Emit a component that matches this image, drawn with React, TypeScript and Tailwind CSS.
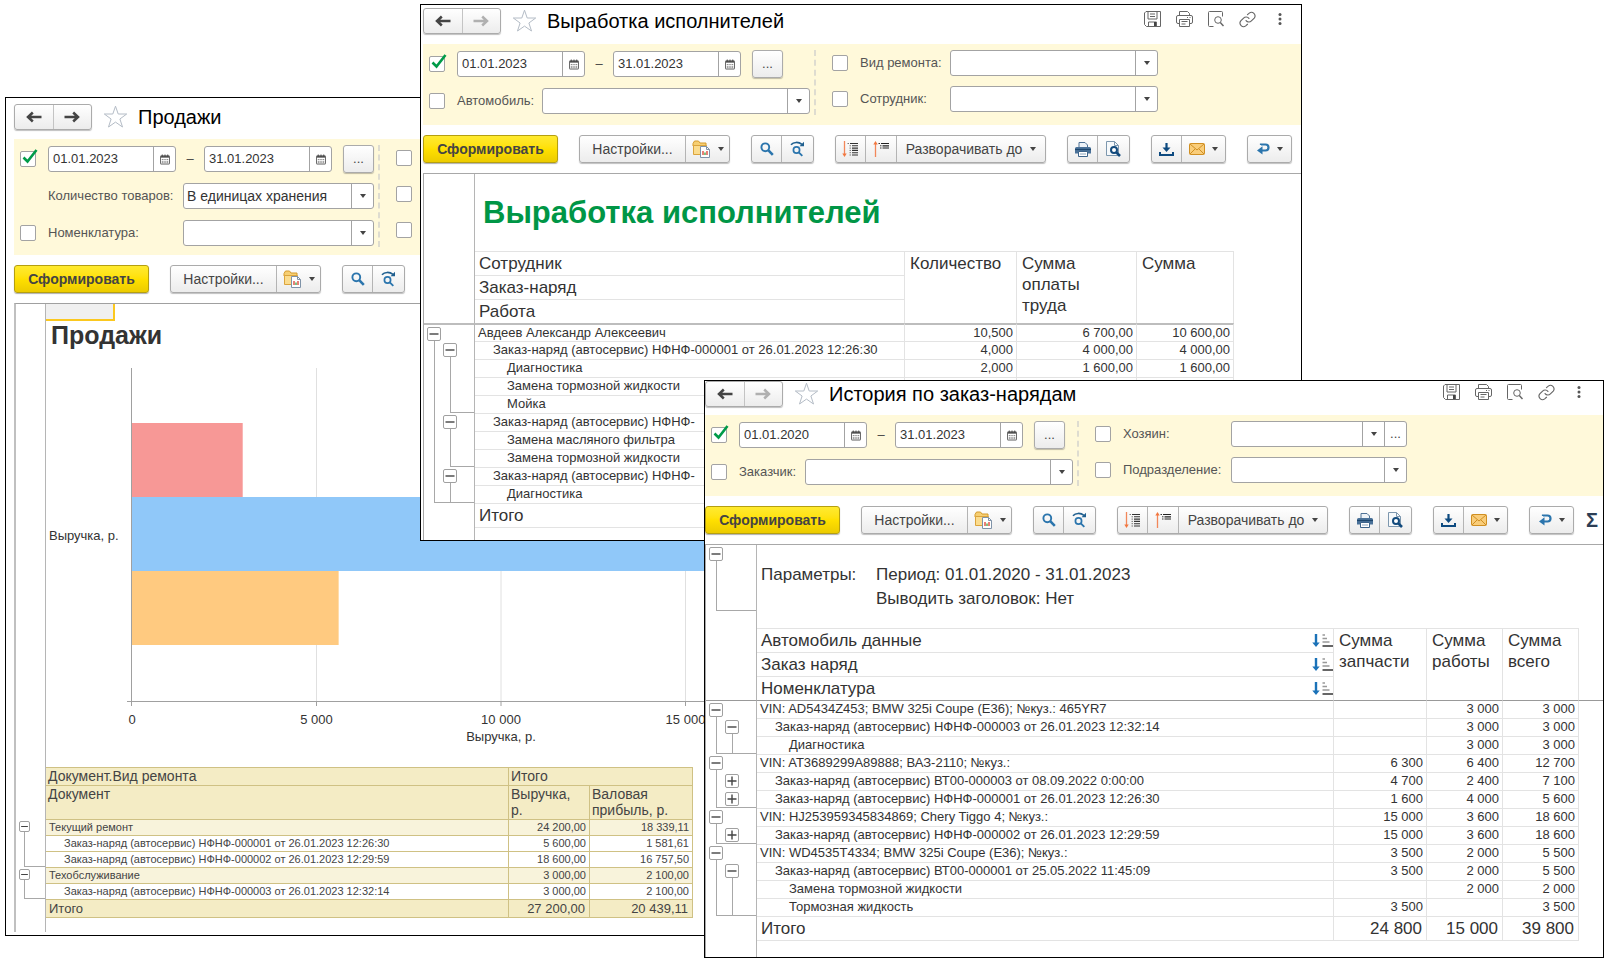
import React, { useId } from "react";
import clsx from "clsx";

/* ---------- icons ---------- */

const Caret = () => (
  <svg width="6" height="4" viewBox="0 0 6 4" className="shrink-0">
    <path d="M0 0h6L3 4z" fill="#444" />
  </svg>
);

const ArrowIcon = ({ right, muted }: { right?: boolean; muted?: boolean }) => (
  <svg width="16" height="12" viewBox="0 0 16 12" fill="none" className={right ? "rotate-180" : ""}>
    <path
      d="M2 6h13.5M6.8 1.5 2 6l4.8 4.5"
      stroke={muted ? "#b0b0b0" : "#444"}
      strokeWidth="2.5"
    />
  </svg>
);

const StarIcon = () => (
  <svg width="25" height="24" viewBox="0 0 24 24" fill="none">
    <path
      d="M12 1.2 14.7 9h8.5l-6.8 5 2.6 8-7-4.9L5 22l2.6-8L.8 9h8.5z"
      stroke="#b4bcc6"
      strokeWidth="1"
    />
  </svg>
);

const CalendarIcon = () => (
  <svg width="10" height="11" viewBox="0 0 11 11">
    <rect x="0.5" y="1.5" width="10" height="9" rx="0.5" fill="#fff" stroke="#555" />
    <path d="M1 2.5h9" stroke="#555" strokeWidth="2" />
    <path d="M2.5 0v2.5M5.5 0v2.5M8.5 0v2.5" stroke="#444" />
    <path d="M2 5.5h7M2 7.5h7M2 9h7" stroke="#555" strokeDasharray="1 1" />
  </svg>
);

const CheckIcon = () => (
  <svg
    width="18"
    height="18"
    viewBox="0 0 18 18"
    fill="none"
    className="pointer-events-none absolute -top-1 left-0 hidden peer-checked:block"
  >
    <path d="M3.5 10.5 7.5 14.5 16.5 3" stroke="#009b48" strokeWidth="2.6" />
  </svg>
);

const FolderReportIcon = () => (
  <svg width="19" height="18" viewBox="0 0 19 18">
    <path d="M1 3.5 2.5 1h4L8 3h6v3H1z" fill="#f6cf73" stroke="#d59a2b" />
    <path d="M1.5 5.5h13v9h-13z" fill="#fbdc8e" stroke="#dba43c" />
    <path d="M8.5 6.5h6l3 3v8h-9z" fill="#fff" stroke="#7f93a8" />
    <path d="M14.5 6.5v3h3" fill="none" stroke="#7f93a8" />
    <path d="M11 15v-4" stroke="#e04b3c" strokeWidth="1.4" />
    <path d="M13 15v-2.5" stroke="#49a84c" strokeWidth="1.4" />
    <path d="M15 15v-4" stroke="#e04b3c" strokeWidth="1.4" />
  </svg>
);

const LensIcon = () => (
  <svg width="14" height="14" viewBox="0 0 14 14" fill="none">
    <circle cx="5.3" cy="5.3" r="3.9" stroke="#2b75ad" strokeWidth="1.9" />
    <path d="m8.2 8.2 4.6 4.6" stroke="#2b75ad" strokeWidth="2.6" />
  </svg>
);

const LensNextIcon = () => (
  <svg width="15" height="16" viewBox="0 0 15 16" fill="none">
    <path d="M1 3.8C3.5.8 8.500.6 12 3.400" stroke="#1f5f8f" strokeWidth="1.600" />
    <path d="M14 .8v4.500H9.500z" fill="#1f5f8f" />
    <circle cx="6.500" cy="9" r="3.100" stroke="#2b75ad" strokeWidth="1.700" />
    <path d="m8.800 11.300 3.500 3.500" stroke="#2b75ad" strokeWidth="1.900" />
  </svg>
);

const ExpandIcon = () => (
  <svg width="17" height="17" viewBox="0 0 17 17" fill="none">
    <path d="M2.500 0v14" stroke="#f2875a" strokeWidth="1.300" />
    <path d="M.3 12.500h4.400L2.500 16z" fill="#f2773f" />
    <path d="M5.500 2.500h1.500M7.500 4.800H9M7.500 7.100H9M7.500 9.400H9M7.500 11.700H9M7.500 14H9" stroke="#777" />
    <path d="M8 2.500h8M10 4.800h6M10 7.100h6M10 9.400h6M10 11.700h6M10 14h6" stroke="#333" strokeWidth="1.100" />
  </svg>
);

const CollapseIcon = () => (
  <svg width="17" height="17" viewBox="0 0 17 17" fill="none">
    <path d="M2.500 16V2" stroke="#f2875a" strokeWidth="1.300" />
    <path d="M.3 3.500h4.400L2.500 0z" fill="#f2773f" />
    <path d="M5.500 2.500H7M7 4.800h1.500M7 7h1.500" stroke="#333" />
    <path d="M8 2.500h8M9.500 4.800H16M9.500 7H16" stroke="#222" strokeWidth="1.200" />
  </svg>
);

const PrinterIcon = () => (
  <svg width="16" height="15" viewBox="0 0 16 15">
    <path d="M4 .5h6l2.500 2.500V7H4z" fill="#eef3f8" stroke="#4f7296" />
    <path d="M1.500 5h13A1.500 1.500 0 0 1 16 6.500V11.500H0V6.500A1.500 1.500 0 0 1 1.500 5z" fill="#4b7299" />
    <path d="M0 7.500h16" stroke="#1d466d" strokeWidth="1.200" />
    <path d="M3.500 9.500h9v5h-9z" fill="#fff" stroke="#3d648b" />
    <path d="M5 12h6" stroke="#8aa4bd" />
  </svg>
);

const DocLensIcon = () => (
  <svg width="15" height="16" viewBox="0 0 15 16" fill="none">
    <path d="M.5.5h8l4 4v10H.5z" fill="#f6f9fb" stroke="#7d97ae" />
    <path d="M8.500.5v4h4" stroke="#7d97ae" />
    <circle cx="8" cy="9" r="3" fill="#fff" stroke="#124a7d" strokeWidth="2" />
    <path d="m10.300 11.300 3.700 3.700" stroke="#124a7d" strokeWidth="2.600" />
  </svg>
);

const DownloadIcon = () => (
  <svg width="15" height="13" viewBox="0 0 15 13" fill="none">
    <path d="M7.500 0v6" stroke="#0d4a80" strokeWidth="2.200" />
    <path d="M3.500 4.500h8L7.500 9z" fill="#0d4a80" />
    <path d="M1 9v3h13V9" stroke="#0d4a80" strokeWidth="2" />
  </svg>
);

const MailIcon = () => (
  <svg width="16" height="12" viewBox="0 0 16 12" fill="none">
    <rect x="0.5" y="0.5" width="15" height="11" rx="1" fill="#f9cd7a" stroke="#d08f22" />
    <path d="m1 1 7 6 7-6M1 11l5-5M15 11l-5-5" stroke="#d08f22" />
  </svg>
);

const ReturnIcon = () => (
  <svg width="13" height="12" viewBox="0 0 13 12" fill="none">
    <path d="M4 2V1.500h4.500a3 3 0 0 1 0 6H5" stroke="#2b75ad" strokeWidth="2.200" />
    <path d="M5.500 3.200v8.300L0 7.400z" fill="#2b75ad" />
  </svg>
);

const SaveIcon = () => (
  <svg width="17" height="16" viewBox="0 0 17 16" fill="none" stroke="#666">
    <path d="M2 .5h14.500v15H2.500L.5 13.500V2z" />
    <path d="M4 .5v7.500h9V.5M6 3h5M6 5.500h5" />
    <path d="M4.500 15.500v-4.500h8v4.500" />
    <path d="M10 11h2v4h-2z" fill="#444" stroke="none" />
  </svg>
);

const PrintOutlineIcon = () => (
  <svg width="17" height="16" viewBox="0 0 17 16" fill="none" stroke="#666">
    <path d="M3.500 4.500v-4h8l2 2v2" />
    <path d="M3.500 12.500H2A1.500 1.500 0 0 1 .5 11V6A1.500 1.500 0 0 1 2 4.500h13A1.500 1.500 0 0 1 16.500 6v5a1.500 1.500 0 0 1-1.500 1.500h-1.500" />
    <path d="M3.500 8.500h10v7h-10zM5.500 10.500h6M5.500 13h4M11 6.500h1M13.500 6.500h1" />
  </svg>
);

const PreviewOutlineIcon = () => (
  <svg width="16" height="16" viewBox="0 0 16 16" fill="none" stroke="#666">
    <path d="M5.500 15.500H1.500a1 1 0 0 1-1-1v-13a1 1 0 0 1 1-1h12a1 1 0 0 1 1 1v4" />
    <circle cx="10" cy="9" r="3.300" />
    <path d="m12.300 11.500 3.200 3.500" strokeWidth="1.500" />
  </svg>
);

const LinkIcon = () => (
  <svg width="17" height="17" viewBox="0 0 24 24" fill="none" stroke="#666" strokeWidth="1.600" strokeLinecap="round">
    <path d="M10 13.500a5 5 0 0 0 7.500.5l4-4a5 5 0 0 0-7-7L12 5.200" />
    <path d="M14 10.500a5 5 0 0 0-7.500-.5l-4 4a5 5 0 0 0 7 7l2.500-2.300" />
  </svg>
);

const DotsIcon = () => (
  <svg width="4" height="12" viewBox="0 0 4 12" fill="#555">
    <circle cx="2" cy="1.500" r="1.500" />
    <circle cx="2" cy="6" r="1.500" />
    <circle cx="2" cy="10.500" r="1.500" />
  </svg>
);

const SortIcon = () => (
  <svg width="21" height="14" viewBox="0 0 21 14" fill="none">
    <path d="M4 0v10" stroke="#1b72b8" strokeWidth="2.400" />
    <path d="M.3 8.500h7.400L4 13z" fill="#1b72b8" />
    <path d="M10.500 1h2.500M10.500 4.500h4.500M10.500 8h7" stroke="#999" strokeWidth="1.300" />
    <path d="M10.500 12h10.500" stroke="#666" strokeWidth="2" />
  </svg>
);

/* ---------- form controls ---------- */

const fieldBox = "h-[26px] rounded-[3px] border border-[#a3a3a3] bg-white";
const raised = "rounded-[3px] border border-[#ababab] bg-linear-to-b from-white to-[#ececec] shadow-[0_1px_1px_#00000040]";

const Check = ({ id, label, checked }: { id?: string; label: string; checked?: boolean }) => (
  <span className="relative block h-4 w-4 shrink-0">
    <input
      id={id}
      type="checkbox"
      aria-label={label}
      defaultChecked={checked}
      className="peer block h-4 w-4 appearance-none rounded-[2px] border border-[#a3a3a3] bg-white"
    />
    <CheckIcon />
  </span>
);

const DateField = ({ value, label }: { value: string; label: string }) => (
  <div className={clsx(fieldBox, "flex w-32 shrink-0")}>
    <input
      aria-label={label}
      defaultValue={value}
      className="w-0 flex-1 pl-1 text-[13px] text-[#333] outline-none"
    />
    <button aria-label="Календарь" className="flex w-[22px] items-center justify-center border-l border-[#a3a3a3]">
      <CalendarIcon />
    </button>
  </div>
);

const Select = ({ id, value = "", more, className }: { id: string; value?: string; more?: boolean; className: string }) => (
  <div className={clsx(fieldBox, "flex", className)}>
    <div className="relative flex-1">
      <select id={id} className="block h-6 w-full appearance-none pr-6 pl-[3px] text-[14px] text-[#333] outline-none">
        <option>{value}</option>
      </select>
      <span className="pointer-events-none absolute inset-y-0 right-0 flex w-[22px] items-center justify-center border-l border-[#a3a3a3]">
        <Caret />
      </span>
    </div>
    {more && (
      <button aria-label="Выбрать" className="w-[22px] border-l border-[#a3a3a3] text-[13px] leading-6 text-[#444]">
        ...
      </button>
    )}
  </div>
);

interface FieldProps {
  label: string;
  value?: string;
  more?: boolean;
  noCheck?: boolean;
  labelClass: string;
  selectClass: string;
  rowClass?: string;
}

const FilterField = ({ label, value, more, noCheck, labelClass, selectClass, rowClass = "h-7" }: FieldProps) => {
  const id = useId();
  return (
    <div className={clsx("flex items-center", rowClass)}>
      {noCheck ? <span className="w-4 shrink-0" /> : <Check label={label} />}
      <label htmlFor={id} className={clsx("ml-3 shrink-0 text-[13px] whitespace-nowrap text-[#555]", labelClass)}>
        {label}
      </label>
      <Select id={id} value={value} more={more} className={selectClass} />
    </div>
  );
};

const Period = ({ from, to }: { from: string; to: string }) => (
  <div className="flex h-7 items-center">
    <Check label="Период" checked />
    <div className="ml-3 flex items-center">
      <DateField value={from} label="Начало периода" />
      <span className="w-7 text-center text-[13px] text-[#444]">–</span>
      <DateField value={to} label="Конец периода" />
    </div>
    <button aria-label="Выбрать период" className={clsx(raised, "ml-[11px] h-7 w-[31px] text-[13px] text-[#444]")}>
      ...
    </button>
  </div>
);

const Filters = ({ left, right, className = "pb-[10px]" }: { left: React.ReactNode; right: React.ReactNode; className?: string }) => (
  <div className={clsx("flex bg-[#fff9da] pt-[6px] pl-[6px]", className)}>
    <div className="flex shrink-0 flex-col gap-[9px]">{left}</div>
    <div className="ml-1 shrink-0 border-l-2 border-dashed border-[#dedcd0]" />
    <div className="ml-4 flex flex-col gap-[10px]">{right}</div>
  </div>
);

/* ---------- window parts ---------- */

interface TitleBarProps {
  title: string;
  forward?: boolean;
  actions?: string;
  className: string;
}

const TitleBar = ({ title, forward, actions, className }: TitleBarProps) => (
  <div className={clsx("flex", className)}>
    <div className={clsx(raised, "flex h-[26px] w-[78px]")}>
      <button aria-label="Назад" className="flex flex-1 items-center justify-center">
        <ArrowIcon />
      </button>
      <button aria-label="Вперед" className="flex flex-1 items-center justify-center border-l border-[#c4c4c4]">
        <ArrowIcon right muted={!forward} />
      </button>
    </div>
    <button aria-label="В избранное" className="ml-[11px]">
      <StarIcon />
    </button>
    <h1 className="ml-[10px] text-[20px] leading-[26px] whitespace-nowrap text-black">{title}</h1>
    {actions && (
      <div className={clsx("ml-auto flex h-[22px] items-center gap-[15px]", actions)}>
        <button aria-label="Сохранить"><SaveIcon /></button>
        <button aria-label="Печать"><PrintOutlineIcon /></button>
        <button aria-label="Просмотр"><PreviewOutlineIcon /></button>
        <button aria-label="Ссылка"><LinkIcon /></button>
        <button aria-label="Еще" className="flex w-[17px] justify-center"><DotsIcon /></button>
      </div>
    )}
  </div>
);

const Group = ({ children }: { children: React.ReactNode }) => (
  <div className={clsx(raised, "flex h-7 shrink-0 divide-x divide-[#b4b4b4]")}>{children}</div>
);

const Tool = ({ label, caret, children }: { label: string; caret?: boolean; children: React.ReactNode }) => (
  <button
    aria-label={label}
    className={clsx("flex items-center justify-center", caret ? "w-[43px] gap-[7px]" : "w-[31px] first:w-[30px]")}
  >
    {children}
    {caret && <Caret />}
  </button>
);

const Toolbar = ({ full, sum }: { full?: boolean; sum?: boolean }) => (
  <div className="flex gap-[21px] py-[10px]">
    <button className="h-7 w-[135px] shrink-0 rounded-[3px] border border-[#b59f10] bg-linear-to-b from-[#ffea2e] via-[#ffe000] to-[#eccb00] text-[14px] font-bold text-[#444] shadow-[0_1px_1px_#00000050]">
      Сформировать
    </button>
    <Group>
      <button className="w-[106px] text-[14px] text-[#444]">Настройки...</button>
      <Tool label="Варианты отчета" caret><FolderReportIcon /></Tool>
    </Group>
    <Group>
      <Tool label="Найти"><LensIcon /></Tool>
      <Tool label="Найти далее"><LensNextIcon /></Tool>
    </Group>
    {full && (
      <>
        <Group>
          <Tool label="Развернуть"><ExpandIcon /></Tool>
          <Tool label="Свернуть"><CollapseIcon /></Tool>
          <button className="flex w-[148px] items-center justify-center gap-2 text-[14px] whitespace-nowrap text-[#444]">
            Разворачивать до <Caret />
          </button>
        </Group>
        <Group>
          <Tool label="Печать"><PrinterIcon /></Tool>
          <Tool label="Предварительный просмотр"><DocLensIcon /></Tool>
        </Group>
        <Group>
          <Tool label="Сохранить"><DownloadIcon /></Tool>
          <Tool label="Отправить" caret><MailIcon /></Tool>
        </Group>
        <div className="flex gap-3">
          <Group>
            <Tool label="Вернуть" caret><ReturnIcon /></Tool>
          </Group>
          {sum && (
            <button aria-label="Сумма" className="text-[20px] leading-7 font-bold text-[#2c3e55]">Σ</button>
          )}
        </div>
      </>
    )}
  </div>
);

/* ---------- outline gutter: "-" and "+" toggles, "|" line, "L" closing corner ---------- */

const Toggle = ({ open, small }: { open: boolean; small?: boolean }) => (
  <button
    aria-label={open ? "Свернуть группу" : "Развернуть группу"}
    className={clsx(
      "shrink-0 rounded-[2px] border border-[#a0a0a0] bg-white",
      small ? "h-[11px] w-[11px]" : "h-[14px] w-[14px]"
    )}
  >
    <svg viewBox="0 0 12 12" className="block h-full w-full" stroke="#444" strokeWidth="1.400">
      <path d={open ? "M1.500 6h9" : "M1.500 6h9M6 1.500v9"} />
    </svg>
  </button>
);

const Gutter = ({ marks, small, className }: { marks: string; small?: boolean; className: string }) => {
  const corner = marks.indexOf("L");
  return (
    <div className={clsx("flex pl-[3px]", className)}>
      {marks.split("").map((m, i) => {
        const closing = corner >= 0 && i > corner;
        if (m === "-" || m === "+") {
          return (
            <span key={i} className={clsx("flex w-4 flex-col items-start pt-[2px]", closing && "border-b border-[#a8a8a8]")}>
              <Toggle open={m === "-"} small={small} />
              {m === "-" && <span className={clsx("flex-1 border-l border-[#a8a8a8]", small ? "ml-[5px]" : "ml-[7px]")} />}
            </span>
          );
        }
        return (
          <span key={i} className={clsx("flex w-4", closing && "border-b border-[#a8a8a8]")}>
            <span
              className={clsx(
                "flex-1 border-l border-[#a8a8a8]",
                small ? "ml-[5px]" : "ml-[7px]",
                m === "L" && !closing && "border-b"
              )}
            />
          </span>
        );
      })}
      <span className={clsx("flex-1", corner >= 0 && "border-b border-[#a8a8a8]")} />
    </div>
  );
};

/* ---------- report tables ---------- */

interface Row {
  marks: string;
  level: number;
  name: string;
  values: string[];
}

const indent = ["pl-[3px]", "pl-[18px]", "pl-8"];
const gutterLine = "border-r border-[#b5b5b5]";

interface ReportProps {
  groups: string[];
  columns: { title: string; width: string }[];
  filler: string;
  rows: Row[];
  total: string[];
  sortable?: boolean;
  headLine: string;
  firstGutter: string;
  fullLine?: boolean;
}

const ReportTable = ({ groups, columns, filler, rows, total, sortable, headLine, firstGutter, fullLine }: ReportProps) => (
  <table className="w-full table-fixed border-separate border-spacing-0 text-left text-[#333]">
    <colgroup>
      <col className="w-[51px]" />
      <col />
      {columns.map((c) => (
        <col key={c.title} className={c.width} />
      ))}
      <col className={filler} />
    </colgroup>
    <thead className="text-[17px]">
      {groups.map((g, i) => (
        <tr key={g} className="h-6">
          {i === 0 && <td rowSpan={groups.length} className={gutterLine} />}
          <th className="border-t border-r border-[#e3e3e3] p-0 pl-1 leading-[23px] font-normal">
            <div className="flex items-center justify-between">
              {g}
              {sortable && <SortIcon />}
            </div>
          </th>
          {i === 0 &&
            columns.map((c) => (
              <th
                key={c.title}
                rowSpan={groups.length}
                className="border-t border-r border-[#e3e3e3] p-0 pt-px pl-[5px] align-top leading-[21px] font-normal whitespace-pre-line"
              >
                {c.title}
              </th>
            ))}
          {i === 0 && <td rowSpan={groups.length} />}
        </tr>
      ))}
    </thead>
    <tbody className="text-[13px] leading-4">
      {rows.map((r, i) => {
        const line = i === 0 ? headLine : "border-t border-t-[#e3e3e3]";
        return (
          <tr key={i}>
            <td className={clsx("p-0", gutterLine, i === 0 && headLine)}>
              <Gutter marks={r.marks} className={i === 0 ? firstGutter : "h-[18px]"} />
            </td>
            <td className={clsx("border-r border-r-[#e3e3e3] p-0 align-top whitespace-nowrap", line, indent[r.level])}>{r.name}</td>
            {r.values.map((v, j) => (
              <td key={j} className={clsx("border-r border-r-[#e3e3e3] p-0 pr-[3px] text-right align-top", line)}>
                {v}
              </td>
            ))}
            <td className={clsx("p-0", i === 0 && fullLine && headLine)} />
          </tr>
        );
      })}
    </tbody>
    <tfoot className="text-[17px] leading-[23px]">
      <tr>
        <td className={gutterLine} />
        <td className="border-y border-r border-[#e3e3e3] p-0 pl-1">Итого</td>
        {total.map((v, j) => (
          <td key={j} className="border-y border-r border-[#e3e3e3] p-0 pr-1 text-right">
            {v}
          </td>
        ))}
        <td />
      </tr>
    </tfoot>
  </table>
);

/* ---------- data ---------- */

const order = (n: string) => `Заказ-наряд (автосервис) ${n}`;

const outputRows: Row[] = [
  { marks: "-", level: 0, name: "Авдеев Александр Алексеевич", values: ["10,500", "6 700,00", "10 600,00"] },
  { marks: "|-", level: 1, name: order("НФНФ-000001 от 26.01.2023 12:26:30"), values: ["4,000", "4 000,00", "4 000,00"] },
  { marks: "||", level: 2, name: "Диагностика", values: ["2,000", "1 600,00", "1 600,00"] },
  { marks: "||", level: 2, name: "Замена тормозной жидкости", values: ["", "", ""] },
  { marks: "|L", level: 2, name: "Мойка", values: ["", "", ""] },
  { marks: "|-", level: 1, name: order("НФНФ-"), values: ["", "", ""] },
  { marks: "||", level: 2, name: "Замена масляного фильтра", values: ["", "", ""] },
  { marks: "|L", level: 2, name: "Замена тормозной жидкости", values: ["", "", ""] },
  { marks: "|-", level: 1, name: order("НФНФ-"), values: ["", "", ""] },
  { marks: "LL", level: 2, name: "Диагностика", values: ["", "", ""] },
];

const historyRows: Row[] = [
  { marks: "-", level: 0, name: "VIN: AD5434Z453; BMW 325i Coupe (E36); №куз.: 465YR7", values: ["", "3 000", "3 000"] },
  { marks: "|-", level: 1, name: order("НФНФ-000003 от 26.01.2023 12:32:14"), values: ["", "3 000", "3 000"] },
  { marks: "LL", level: 2, name: "Диагностика", values: ["", "3 000", "3 000"] },
  { marks: "-", level: 0, name: "VIN: AT3689299A89888; ВАЗ-2110; №куз.:", values: ["6 300", "6 400", "12 700"] },
  { marks: "|+", level: 1, name: order("ВТ00-000003 от 08.09.2022 0:00:00"), values: ["4 700", "2 400", "7 100"] },
  { marks: "L+", level: 1, name: order("НФНФ-000001 от 26.01.2023 12:26:30"), values: ["1 600", "4 000", "5 600"] },
  { marks: "-", level: 0, name: "VIN: HJ253959345834869; Chery Tiggo 4; №куз.:", values: ["15 000", "3 600", "18 600"] },
  { marks: "L+", level: 1, name: order("НФНФ-000002 от 26.01.2023 12:29:59"), values: ["15 000", "3 600", "18 600"] },
  { marks: "-", level: 0, name: "VIN: WD4535T4334; BMW 325i Coupe (E36); №куз.:", values: ["3 500", "2 000", "5 500"] },
  { marks: "|-", level: 1, name: order("ВТ00-000001 от 25.05.2022 11:45:09"), values: ["3 500", "2 000", "5 500"] },
  { marks: "||", level: 2, name: "Замена тормозной жидкости", values: ["", "2 000", "2 000"] },
  { marks: "LL", level: 2, name: "Тормозная жидкость", values: ["3 500", "", "3 500"] },
];

const salesRows: Row[] = [
  { marks: "-", level: 0, name: "Текущий ремонт", values: ["24 200,00", "18 339,11"] },
  { marks: "|", level: 1, name: order("НФНФ-000001 от 26.01.2023 12:26:30"), values: ["5 600,00", "1 581,61"] },
  { marks: "L", level: 1, name: order("НФНФ-000002 от 26.01.2023 12:29:59"), values: ["18 600,00", "16 757,50"] },
  { marks: "-", level: 0, name: "Техобслуживание", values: ["3 000,00", "2 100,00"] },
  { marks: "L", level: 1, name: order("НФНФ-000003 от 26.01.2023 12:32:14"), values: ["3 000,00", "2 100,00"] },
];

const bars = [
  { value: 3000, color: "#f79896" },
  { value: 18600, color: "#90c8f9" },
  { value: 5600, color: "#ffca80" },
];

/* ---------- windows ---------- */

const SalesChart = () => {
  const x = (v: number) => 86 + v * 0.0369;
  return (
    <svg width="678" height="418" className="block text-[13px]" fill="#333">
      {[5000, 10000, 15000].map((v) => (
        <path key={v} d={`M${x(v)} 19v333`} stroke="#e0e0e0" />
      ))}
      {bars.map((b, i) => (
        <rect key={b.value} x="86" y={74 + i * 74} width={b.value * 0.0369} height="74" fill={b.color} />
      ))}
      <path d="M85.500 19v338M81 352.500h597" stroke="#a0a0a0" />
      {[5000, 10000, 15000].map((v) => (
        <path key={v} d={`M${x(v)} 352v5`} stroke="#a0a0a0" />
      ))}
      <text x="3" y="191">Выручка, р.</text>
      {["0", "5 000", "10 000", "15 000"].map((t, i) => (
        <text key={t} x={x(i * 5000)} y="375" textAnchor="middle">
          {t}
        </text>
      ))}
      <text x={x(10000)} y="392" textAnchor="middle">
        Выручка, р.
      </text>
    </svg>
  );
};

const SalesTable = () => {
  const cell = "border-t border-r border-[#cfc184] p-0";
  return (
    <table className="w-full table-fixed border-separate border-spacing-0 text-left text-[#444]">
      <colgroup>
        <col className="w-[30px]" />
        <col />
        <col className="w-[81px]" />
        <col className="w-[103px]" />
        <col className="w-[31px]" />
      </colgroup>
      <thead className="bg-[#f4ecc5] text-[14px] leading-[17px]">
        <tr>
          <td rowSpan={2} className={clsx(gutterLine, "bg-white")} />
          <th className={clsx(cell, "pl-[2px] font-normal")}>Документ.Вид ремонта</th>
          <th colSpan={2} className={clsx(cell, "pl-[2px] font-normal")}>Итого</th>
          <td rowSpan={2} className="bg-white" />
        </tr>
        <tr className="h-[34px] align-top">
          <th className={clsx(cell, "pl-[2px] font-normal")}>Документ</th>
          <th className={clsx(cell, "pl-[2px] leading-4 font-normal")}>Выручка,<br />р.</th>
          <th className={clsx(cell, "pl-[2px] leading-4 font-normal")}>Валовая<br />прибыль, р.</th>
        </tr>
      </thead>
      <tbody className="text-[11px] leading-[15px]">
        {salesRows.map((r, i) => {
          const tint = r.level === 0 ? "bg-[#f8f3db]" : "bg-white";
          return (
            <tr key={i}>
              <td className={clsx(gutterLine, "p-0")}>
                <Gutter marks={r.marks} small className="h-4" />
              </td>
              <td className={clsx(cell, tint, indent[r.level])}>{r.name}</td>
              {r.values.map((v) => (
                <td key={v} className={clsx(cell, tint, "pr-[3px] text-right")}>{v}</td>
              ))}
              <td />
            </tr>
          );
        })}
      </tbody>
      <tfoot className="bg-[#f4ecc5] text-[13px] leading-[17px]">
        <tr>
          <td className={clsx(gutterLine, "bg-white")} />
          <td className={clsx(cell, "border-b pl-[3px]")}>Итого</td>
          <td className={clsx(cell, "border-b pr-1 text-right")}>27 200,00</td>
          <td className={clsx(cell, "border-b pr-1 text-right")}>20 439,11</td>
          <td className="bg-white" />
        </tr>
      </tfoot>
    </table>
  );
};

const SalesWindow = () => (
  <section className="absolute top-[97px] left-[5px] w-[720px] overflow-hidden border border-black bg-white pb-[3px] pl-2">
    <TitleBar title="Продажи" forward className="pt-[6px] pb-[9px]" />
    <Filters
      className="pb-2"
      left={
        <>
          <Period from="01.01.2023" to="31.01.2023" />
          <FilterField label="Количество товаров:" value="В единицах хранения" noCheck labelClass="w-[135px]" selectClass="w-[191px]" />
          <FilterField label="Номенклатура:" labelClass="w-[135px]" selectClass="w-[191px]" />
        </>
      }
      right={["Склад", "Партнер", "Менеджер"].map((f) => (
        <div key={f} className="flex h-[26px] items-center">
          <Check label={f} />
        </div>
      ))}
    />
    <Toolbar />
    <div className="border-t border-l-2 border-t-[#a0a0a0] border-l-[#c0c0c0]">
      <div className="flex">
        <div className={clsx(gutterLine, "w-[30px] shrink-0")} />
        <div>
          <div className="h-[17px] w-[69px] border-r-2 border-b-2 border-[#fbc81f] bg-[#f0f0f0]" />
          <h2 className="h-7 pl-[5px] text-[25px] leading-7 font-bold text-[#333]">Продажи</h2>
          <SalesChart />
        </div>
      </div>
      <SalesTable />
      <div className={clsx(gutterLine, "h-[14px] w-[30px]")} />
    </div>
  </section>
);

const OutputWindow = () => (
  <section className="absolute top-1 left-[420px] w-[882px] overflow-hidden border border-black bg-white pl-[2px]">
    <TitleBar title="Выработка исполнителей" actions="pr-[13px]" className="pt-[3px] pb-[10px]" />
    <Filters
      left={
        <>
          <Period from="01.01.2023" to="31.01.2023" />
          <FilterField label="Автомобиль:" labelClass="w-[85px]" selectClass="w-[268px]" />
        </>
      }
      right={
        <>
          <FilterField label="Вид ремонта:" rowClass="h-[26px]" labelClass="w-[90px]" selectClass="w-52" />
          <FilterField label="Сотрудник:" rowClass="h-[26px]" labelClass="w-[90px]" selectClass="w-52" />
        </>
      }
    />
    <Toolbar full />
    <div className="border-t border-l border-[#a8a8a8]">
      <div className="flex">
        <div className={clsx(gutterLine, "w-[51px] shrink-0")} />
        <h2 className="h-[77px] pl-2 text-[31px] leading-[77px] font-bold whitespace-nowrap text-[#009646]">
          Выработка исполнителей
        </h2>
      </div>
      <ReportTable
        groups={["Сотрудник", "Заказ-наряд", "Работа"]}
        columns={[
          { title: "Количество", width: "w-[112px]" },
          { title: "Сумма\nоплаты\nтруда", width: "w-[120px]" },
          { title: "Сумма", width: "w-[97px]" },
        ]}
        filler="w-[67px]"
        rows={outputRows}
        total={["", "", ""]}
        headLine="border-t-2 border-t-[#bdbdbd]"
        firstGutter="h-4"
      />
      <div className={clsx(gutterLine, "h-3 w-[51px]")} />
    </div>
  </section>
);

const HistoryWindow = () => (
  <section className="absolute top-[380px] right-[5px] left-[704px] overflow-hidden border border-black bg-white">
    <TitleBar title="История по заказ-нарядам" actions="pr-4" className="pb-2" />
    <Filters
      left={
        <>
          <Period from="01.01.2020" to="31.01.2023" />
          <FilterField label="Заказчик:" labelClass="w-[66px]" selectClass="w-[268px]" />
        </>
      }
      right={
        <>
          <FilterField label="Хозяин:" more rowClass="h-[26px]" labelClass="w-[108px]" selectClass="w-44" />
          <FilterField label="Подразделение:" rowClass="h-[26px]" labelClass="w-[108px]" selectClass="w-44" />
        </>
      }
    />
    <Toolbar full sum />
    <div className="border-t border-l border-[#a8a8a8]">
      <div className="flex h-[83px]">
        <div className={clsx(gutterLine, "w-[51px] shrink-0")}>
          <Gutter marks="-" className="h-[65px]" />
          <div className="ml-[10px] border-t border-[#a8a8a8]" />
        </div>
        <dl className="flex pt-[18px] pl-1 text-[17px] leading-6 whitespace-nowrap text-[#333]">
          <dt className="w-[115px]">Параметры:</dt>
          <dd>
            Период: 01.01.2020 - 31.01.2023
            <br />
            Выводить заголовок: Нет
          </dd>
        </dl>
      </div>
      <ReportTable
        groups={["Автомобиль данные", "Заказ наряд", "Номенклатура"]}
        columns={[
          { title: "Сумма\nзапчасти", width: "w-[93px]" },
          { title: "Сумма\nработы", width: "w-[76px]" },
          { title: "Сумма\nвсего", width: "w-[76px]" },
        ]}
        filler="w-6"
        rows={historyRows}
        total={["24 800", "15 000", "39 800"]}
        sortable
        headLine="border-t border-t-[#999999]"
        firstGutter="h-[17px]"
        fullLine
      />
      <div className={clsx(gutterLine, "h-4 w-[51px]")} />
    </div>
  </section>
);

export default function App() {
  return (
    <main className="relative min-h-screen overflow-hidden bg-white font-['Liberation_Sans',Arial,sans-serif]">
      <SalesWindow />
      <OutputWindow />
      <HistoryWindow />
    </main>
  );
}
